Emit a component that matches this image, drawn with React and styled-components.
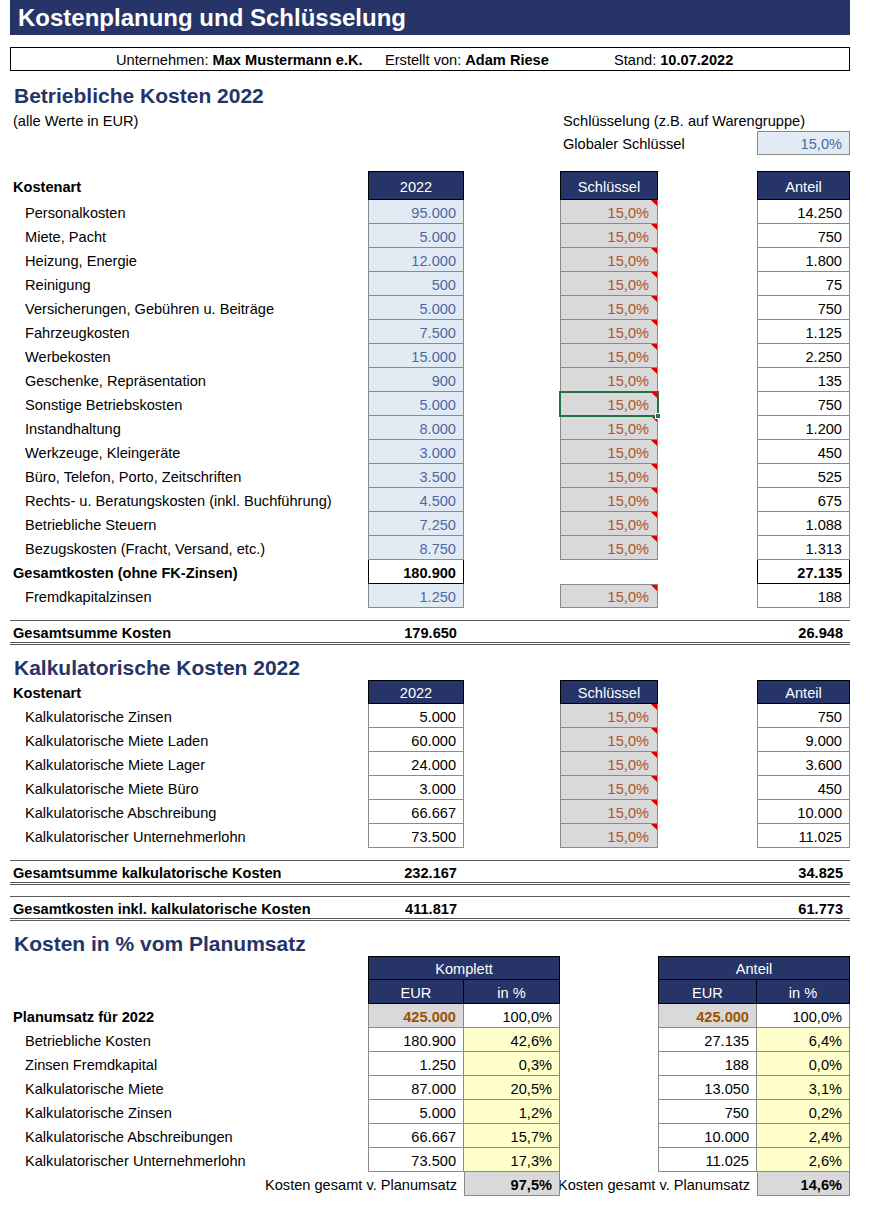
import styled, { createGlobalStyle, css } from 'styled-components';

const navy = '#263468';
const grid = '#8a8a8a';

const GlobalStyle = createGlobalStyle`
  * { box-sizing: border-box; }
  body {
    margin: 0;
    background: #fff;
    font-family: 'Liberation Sans', Arial, sans-serif;
    font-size: 14.6px;
    color: #000;
  }
`;

const Page = styled.div`
  width: 850px;
  padding-left: 10px;
`;

const TitleBar = styled.div`
  height: 35px;
  background: ${navy};
  color: #fff;
  font-size: 24px;
  font-weight: 700;
  display: flex;
  align-items: center;
  padding-left: 8px;
`;

const InfoBox = styled.div`
  margin-top: 12px;
  height: 24px;
  border: 1px solid #000;
  display: flex;
  align-items: center;
  padding: 1px 0 0 105px;
`;

const Field = styled.span`
  width: ${(p) => p.$w}px;
  white-space: nowrap;
  b { font-weight: 700; }
`;

const Heading = styled.h2`
  margin: ${(p) => p.$mt}px 0 0;
  height: 24px;
  line-height: 24px;
  padding-left: 4px;
  font-size: 21px;
  font-weight: 700;
  color: ${navy};
`;

const Row = styled.div`
  display: grid;
  grid-template-columns: 358px 96px 96px 98px 99px 93px;
  height: ${(p) => p.$h || 24}px;
  margin-top: ${(p) => p.$mt || 0}px;
`;

const TotalRow = styled(Row)`
  height: 25px;
  border-top: 1px solid #595959;
  border-bottom: 3px double #595959;
  font-weight: 700;
`;

const Label = styled.div`
  grid-column: ${(p) => p.$col || '1'};
  display: flex;
  align-items: center;
  justify-content: ${(p) => (p.$right ? 'flex-end' : 'flex-start')};
  padding-top: 2px;
  padding-left: ${(p) => (p.$indent ? 15 : 3)}px;
  padding-right: ${(p) => (p.$right ? 7 : 0)}px;
  font-weight: ${(p) => (p.$bold ? 700 : 'inherit')};
  white-space: nowrap;
  overflow: ${(p) => (p.$clip ? 'hidden' : 'visible')};
`;

const Value = styled.div`
  grid-column: ${(p) => p.$col};
  display: flex;
  align-items: center;
  justify-content: flex-end;
  padding: 2px 7px 0 0;
`;

const variants = {
  head: css`
    background: ${navy};
    color: #fff;
    border-color: #000;
    justify-content: center;
    padding-right: 0;
  `,
  input: css`
    background: #e2eaf3;
    color: #4a6aa5;
  `,
  key: css`
    background: #d9d9d9;
    color: #a9582a;
    padding-right: 8px;
    &::after {
      content: '';
      position: absolute;
      top: 0;
      right: 0;
      border-top: 6px solid #e00000;
      border-left: 6px solid transparent;
    }
  `,
  plain: css`
    background: #fff;
  `,
  bold: css`
    background: #fff;
    font-weight: 700;
    border-color: #000;
  `,
  total: css`
    background: #d9d9d9;
    font-weight: 700;
  `,
  plan: css`
    background: #d9d9d9;
    color: #9c5200;
    font-weight: 700;
  `,
  yellow: css`
    background: #ffffcc;
  `,
};

const Cell = styled.div`
  grid-column: ${(p) => p.$col};
  position: relative;
  display: flex;
  align-items: center;
  justify-content: flex-end;
  padding-top: 2px;
  padding-right: 7px;
  border: 1px solid ${grid};
  border-top-width: ${(p) => (p.$nt ? 0 : 1)}px;
  border-left-width: ${(p) => (p.$nl ? 0 : 1)}px;
  ${(p) => variants[p.$v || 'plain']}
  ${(p) =>
    p.$selected &&
    css`
      z-index: 2;
      outline: 2px solid #217346;
      outline-offset: -1px;
    `}
`;

const Handle = styled.span`
  position: absolute;
  right: -4px;
  bottom: -4px;
  width: 6px;
  height: 6px;
  background: #217346;
  border: 1px solid #fff;
`;

const betrieb = [
  ['Personalkosten', '95.000', '14.250'],
  ['Miete, Pacht', '5.000', '750'],
  ['Heizung, Energie', '12.000', '1.800'],
  ['Reinigung', '500', '75'],
  ['Versicherungen, Gebühren u. Beiträge', '5.000', '750'],
  ['Fahrzeugkosten', '7.500', '1.125'],
  ['Werbekosten', '15.000', '2.250'],
  ['Geschenke, Repräsentation', '900', '135'],
  ['Sonstige Betriebskosten', '5.000', '750'],
  ['Instandhaltung', '8.000', '1.200'],
  ['Werkzeuge, Kleingeräte', '3.000', '450'],
  ['Büro, Telefon, Porto, Zeitschriften', '3.500', '525'],
  ['Rechts- u. Beratungskosten (inkl. Buchführung)', '4.500', '675'],
  ['Betriebliche Steuern', '7.250', '1.088'],
  ['Bezugskosten (Fracht, Versand, etc.)', '8.750', '1.313'],
];

const kalk = [
  ['Kalkulatorische Zinsen', '5.000', '750'],
  ['Kalkulatorische Miete Laden', '60.000', '9.000'],
  ['Kalkulatorische Miete Lager', '24.000', '3.600'],
  ['Kalkulatorische Miete Büro', '3.000', '450'],
  ['Kalkulatorische Abschreibung', '66.667', '10.000'],
  ['Kalkulatorischer Unternehmerlohn', '73.500', '11.025'],
];

const umsatz = [
  ['Betriebliche Kosten', '180.900', '42,6%', '27.135', '6,4%'],
  ['Zinsen Fremdkapital', '1.250', '0,3%', '188', '0,0%'],
  ['Kalkulatorische Miete', '87.000', '20,5%', '13.050', '3,1%'],
  ['Kalkulatorische Zinsen', '5.000', '1,2%', '750', '0,2%'],
  ['Kalkulatorische Abschreibungen', '66.667', '15,7%', '10.000', '2,4%'],
  ['Kalkulatorischer Unternehmerlohn', '73.500', '17,3%', '11.025', '2,6%'],
];

export default function App() {
  return (
    <Page>
      <GlobalStyle />
      <TitleBar>Kostenplanung und Schlüsselung</TitleBar>
      <InfoBox>
        <Field $w={269}>
          Unternehmen: <b>Max Mustermann e.K.</b>
        </Field>
        <Field $w={229}>
          Erstellt von: <b>Adam Riese</b>
        </Field>
        <Field $w={200}>
          Stand: <b>10.07.2022</b>
        </Field>
      </InfoBox>

      <Heading $mt={13}>Betriebliche Kosten 2022</Heading>
      <Row $h={23}>
        <Label>(alle Werte in EUR)</Label>
        <Label $col="4 / 7">Schlüsselung (z.B. auf Warengruppe)</Label>
      </Row>
      <Row>
        <Label $col="4 / 6">Globaler Schlüssel</Label>
        <Cell $col="6" $v="input">15,0%</Cell>
      </Row>

      <Row $h={29} $mt={16}>
        <Label $bold>Kostenart</Label>
        <Cell $col="2" $v="head">2022</Cell>
        <Cell $col="4" $v="head">Schlüssel</Cell>
        <Cell $col="6" $v="head">Anteil</Cell>
      </Row>
      {betrieb.map(([name, year, share], i) => (
        <Row key={name}>
          <Label $indent>{name}</Label>
          <Cell $col="2" $v="input" $nt>{year}</Cell>
          <Cell $col="4" $v="key" $nt $selected={i === 8}>
            15,0%
            {i === 8 && <Handle />}
          </Cell>
          <Cell $col="6" $nt>{share}</Cell>
        </Row>
      ))}
      <Row>
        <Label $bold>Gesamtkosten (ohne FK-Zinsen)</Label>
        <Cell $col="2" $v="bold" $nt>180.900</Cell>
        <Cell $col="6" $v="bold" $nt>27.135</Cell>
      </Row>
      <Row>
        <Label $indent>Fremdkapitalzinsen</Label>
        <Cell $col="2" $v="input" $nt>1.250</Cell>
        <Cell $col="4" $v="key">15,0%</Cell>
        <Cell $col="6" $nt>188</Cell>
      </Row>
      <TotalRow $mt={12}>
        <Label $bold>Gesamtsumme Kosten</Label>
        <Value $col="2">179.650</Value>
        <Value $col="6">26.948</Value>
      </TotalRow>

      <Heading $mt={11}>Kalkulatorische Kosten 2022</Heading>
      <Row>
        <Label $bold>Kostenart</Label>
        <Cell $col="2" $v="head">2022</Cell>
        <Cell $col="4" $v="head">Schlüssel</Cell>
        <Cell $col="6" $v="head">Anteil</Cell>
      </Row>
      {kalk.map(([name, year, share]) => (
        <Row key={name}>
          <Label $indent>{name}</Label>
          <Cell $col="2" $nt>{year}</Cell>
          <Cell $col="4" $v="key" $nt>15,0%</Cell>
          <Cell $col="6" $nt>{share}</Cell>
        </Row>
      ))}
      <TotalRow $mt={12}>
        <Label $bold>Gesamtsumme kalkulatorische Kosten</Label>
        <Value $col="2">232.167</Value>
        <Value $col="6">34.825</Value>
      </TotalRow>
      <TotalRow $mt={11}>
        <Label $bold>Gesamtkosten inkl. kalkulatorische Kosten</Label>
        <Value $col="2">411.817</Value>
        <Value $col="6">61.773</Value>
      </TotalRow>

      <Heading $mt={11}>Kosten in % vom Planumsatz</Heading>
      <Row>
        <Cell $col="2 / 4" $v="head">Komplett</Cell>
        <Cell $col="5 / 7" $v="head">Anteil</Cell>
      </Row>
      <Row>
        <Cell $col="2" $v="head" $nt>EUR</Cell>
        <Cell $col="3" $v="head" $nt $nl>in %</Cell>
        <Cell $col="5" $v="head" $nt>EUR</Cell>
        <Cell $col="6" $v="head" $nt $nl>in %</Cell>
      </Row>
      <Row>
        <Label $bold>Planumsatz für 2022</Label>
        <Cell $col="2" $v="plan" $nt>425.000</Cell>
        <Cell $col="3" $nt $nl>100,0%</Cell>
        <Cell $col="5" $v="plan" $nt>425.000</Cell>
        <Cell $col="6" $nt $nl>100,0%</Cell>
      </Row>
      {umsatz.map(([name, eur, pct, shareEur, sharePct]) => (
        <Row key={name}>
          <Label $indent>{name}</Label>
          <Cell $col="2" $nt>{eur}</Cell>
          <Cell $col="3" $v="yellow" $nt $nl>{pct}</Cell>
          <Cell $col="5" $nt>{shareEur}</Cell>
          <Cell $col="6" $v="yellow" $nt $nl>{sharePct}</Cell>
        </Row>
      ))}
      <Row>
        <Label $col="1 / 3" $right>Kosten gesamt v. Planumsatz</Label>
        <Cell $col="3" $v="total" $nt>97,5%</Cell>
        <Label $col="4 / 6" $right $clip>Kosten gesamt v. Planumsatz</Label>
        <Cell $col="6" $v="total" $nt>14,6%</Cell>
      </Row>
    </Page>
  );
}
